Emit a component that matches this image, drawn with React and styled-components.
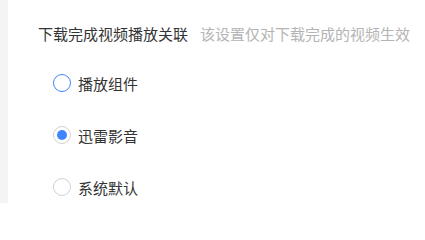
import React, { useState } from "react";
import styled, { createGlobalStyle } from "styled-components";

const GlobalStyle = createGlobalStyle`
  html, body {
    margin: 0;
    padding: 0;
    background: #ffffff;
  }
  body {
    font-family: "Microsoft YaHei", "Noto Sans CJK SC", "Noto Sans", sans-serif;
  }
`;

const options = [
  { id: "component", label: "播放组件", state: "hover" },
  { id: "xunlei", label: "迅雷影音" },
  { id: "system", label: "系统默认" },
];

function App() {
  const [selected, setSelected] = useState("xunlei");

  return (
    <>
      <GlobalStyle />
      <Page>
        <SideStrip />
        <Content>
          <TitleRow>
            <Title>下载完成视频播放关联</Title>
            <Hint>该设置仅对下载完成的视频生效</Hint>
          </TitleRow>
          <RadioList>
            {options.map((opt) => (
              <RadioRow key={opt.id} onClick={() => setSelected(opt.id)}>
                <RadioCircle
                  $checked={selected === opt.id}
                  $hover={opt.state === "hover"}
                />
                <RadioLabel>{opt.label}</RadioLabel>
              </RadioRow>
            ))}
          </RadioList>
        </Content>
      </Page>
    </>
  );
}

const Page = styled.div`
  display: flex;
  width: 425px;
  height: 203px;
  overflow: hidden;
  background: #ffffff;
`;

const SideStrip = styled.div`
  width: 8px;
  flex-shrink: 0;
  background: #f4f4f4;
`;

const Content = styled.div`
  flex: 1;
  padding: 23px 0 0 30px;
`;

const TitleRow = styled.div`
  display: flex;
  align-items: center;
  gap: 12px;
  height: 20px;
  white-space: nowrap;
`;

const Title = styled.span`
  font-size: 15px;
  color: #333333;
`;

const Hint = styled.span`
  font-size: 15px;
  color: #b4b4b4;
`;

const RadioList = styled.div`
  display: flex;
  flex-direction: column;
  padding: 14px 0 0 15px;
`;

const RadioRow = styled.div`
  display: flex;
  align-items: center;
  gap: 7px;
  height: 52px;
  cursor: pointer;
`;

const RadioCircle = styled.span`
  position: relative;
  box-sizing: border-box;
  width: 18px;
  height: 18px;
  border-radius: 50%;
  border: 1px solid ${(p) => (p.$hover ? "#3f85ff" : "#d2d2d2")};
  background: #ffffff;
  flex-shrink: 0;

  &::after {
    content: "";
    position: absolute;
    left: 50%;
    top: 50%;
    width: 10px;
    height: 10px;
    margin: -5px 0 0 -5px;
    border-radius: 50%;
    background: #3f85ff;
    display: ${(p) => (p.$checked ? "block" : "none")};
  }
`;

const RadioLabel = styled.span`
  font-size: 15px;
  color: #333333;
`;

export default App;
